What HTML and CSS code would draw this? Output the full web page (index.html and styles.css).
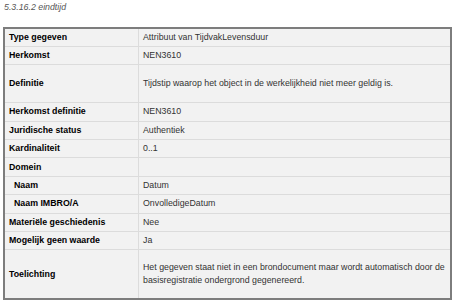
FILE: index.html
```
<!DOCTYPE html>
<html lang="nl">
<head>
<meta charset="utf-8">
<link rel="stylesheet" href="styles.css">
</head>
<body>
<p class="caption">5.3.16.2 eindtijd</p>
<table class="attr">
  <tr><th>Type gegeven</th><td>Attribuut van TijdvakLevensduur</td></tr>
  <tr><th>Herkomst</th><td>NEN3610</td></tr>
  <tr class="tall"><th>Definitie</th><td>Tijdstip waarop het object in de werkelijkheid niet meer geldig is.</td></tr>
  <tr><th>Herkomst definitie</th><td>NEN3610</td></tr>
  <tr><th>Juridische status</th><td>Authentiek</td></tr>
  <tr><th>Kardinaliteit</th><td>0..1</td></tr>
  <tr><th>Domein</th><td></td></tr>
  <tr><th class="sub">Naam</th><td>Datum</td></tr>
  <tr><th class="sub">Naam IMBRO/A</th><td>OnvolledigeDatum</td></tr>
  <tr><th>Materiële geschiedenis</th><td>Nee</td></tr>
  <tr><th>Mogelijk geen waarde</th><td>Ja</td></tr>
  <tr class="taller"><th>Toelichting</th><td>Het gegeven staat niet in een brondocument maar wordt automatisch door de basisregistratie ondergrond gegenereerd.</td></tr>
</table>
</body>
</html>
```
FILE: styles.css
```
html, body {
  margin: 0;
  padding: 0;
  background: #ffffff;
}
body {
  font-family: "Liberation Sans", Arial, sans-serif;
  font-size: 8.8px;
  padding: 2px 1px 0 3px;
}
.caption {
  margin: 0;
  font-style: italic;
  color: #555555;
  height: 25px;
  line-height: 11px;
  padding-left: 1px;
}
.attr {
  width: 449px;
  border-collapse: collapse;
  border: 2px solid #7d7d7d;
  background: #f2f2f2;
  table-layout: fixed;
}
.attr tr {
  height: 18.4px;
  border-bottom: 1px solid #dcdcdc;
}
.attr tr.tall {
  height: 38px;
}
.attr tr.taller {
  height: 49px;
}
.attr th, .attr td {
  padding: 0 4px 0 4px;
  vertical-align: middle;
  line-height: 13px;
  text-align: left;
}
.attr th {
  width: 125px;
  font-weight: bold;
  color: #000000;
  border-right: 1px solid #dcdcdc;
}
.attr th.sub {
  padding-left: 9px;
}
.attr td {
  color: #333333;
  padding-left: 4px;
}
```
